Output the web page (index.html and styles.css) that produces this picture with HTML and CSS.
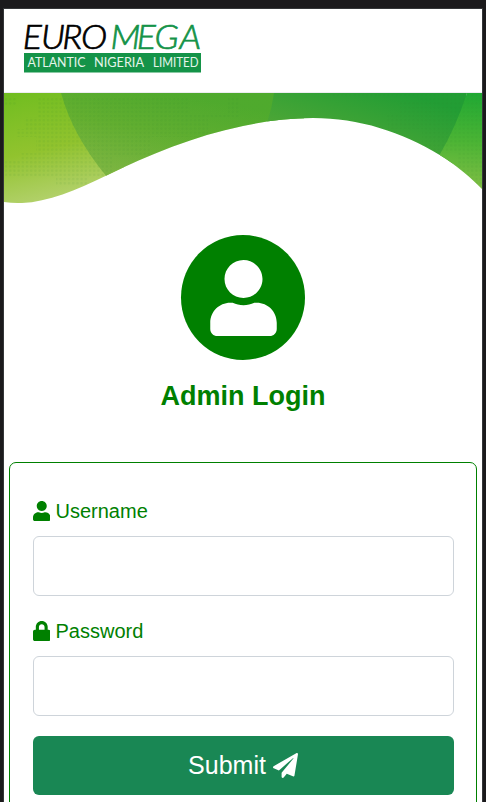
FILE: index.html
```html
<!DOCTYPE html>
<html lang="en">
<head>
<meta charset="utf-8">
<title>Admin Login</title>
<link rel="stylesheet" href="styles.css">
</head>
<body>
<main class="page">
  <header class="header">
    <svg class="logo" viewBox="0 0 178 50" role="img" aria-label="Euromega Atlantic Nigeria Limited">
      <text class="logo-name" transform="scale(1.06 1)" y="24.5" x="-1.2 16 36 53.8">EURO</text>
      <text class="logo-name logo-green" transform="scale(1.06 1)" y="24.5" x="81.6 106.4 123.2 146.6">MEGA</text>
      <rect class="logo-bar" y="29" width="177" height="19.5"/>
      <text class="logo-sub" x="3.5" y="42.5" textLength="58" lengthAdjust="spacingAndGlyphs">ATLANTIC</text>
      <text class="logo-sub" x="70" y="42.5" textLength="50" lengthAdjust="spacingAndGlyphs">NIGERIA</text>
      <text class="logo-sub" x="129" y="42.5" textLength="45.5" lengthAdjust="spacingAndGlyphs">LIMITED</text>
    </svg>
  </header>
  <svg class="wave" viewBox="0 0 478 112" aria-hidden="true">
    <defs>
      <clipPath id="crest"><path d="M0 0H478V96C466 84 452 72 435.7 62C398 39 355 25 309 25C285 25 262 28 239 33C190 43 145 62 102 82.7C72 97 44 109 18 110C12 110.3 6 110 0 109Z"/></clipPath>
      <linearGradient id="left" x2="0.25" y2="1"><stop stop-color="#70bd20"/><stop offset=".55" stop-color="#91c32e"/><stop offset="1" stop-color="#b3d16c"/></linearGradient>
      <linearGradient id="mid" gradientUnits="userSpaceOnUse" x1="160" y1="0" x2="145" y2="85"><stop stop-color="#53aa2d"/><stop offset=".45" stop-color="#65af30"/><stop offset="1" stop-color="#80b642"/></linearGradient>
      <linearGradient id="deep" gradientUnits="userSpaceOnUse" x1="400" y1="0" x2="380" y2="65"><stop stop-color="#229d34"/><stop offset="1" stop-color="#4ca636"/></linearGradient>
      <linearGradient id="right" gradientUnits="userSpaceOnUse" x1="465" y1="0" x2="455" y2="96"><stop stop-color="#20a833"/><stop offset=".5" stop-color="#4bb434"/><stop offset="1" stop-color="#82be45"/></linearGradient>
      <linearGradient id="shine"><stop stop-color="#35a030" stop-opacity="0"/><stop offset="1" stop-color="#45ac2d" stop-opacity=".3"/></linearGradient>
      <pattern id="dots" width="4.2" height="4.2" patternUnits="userSpaceOnUse"><circle cx="2" cy="2" r="1.3" fill="#287a27" fill-opacity=".08"/></pattern>
    </defs>
    <g clip-path="url(#crest)">
      <rect width="120" height="112" fill="url(#left)"/>
      <path d="M57 0C65 29 80 56 103 84L120 112H300V0Z" fill="url(#mid)"/>
      <path d="M57 0C65 29 80 56 103 84L120 112H300V0Z" fill="url(#shine)"/>
      <path d="M270 0Q268 15 263 30L300 112H440L463 0Z" fill="url(#deep)"/>
      <path d="M463 0Q452 34 435 63V112H478V0Z" fill="url(#right)"/>
      <path d="M0 4H12V12H0ZM34 4H186V20H224V4H236V24H204V44H148V64H108V84H84V92H52V84H0V68H16V60H32V44H12V36H20V24H34ZM308 4H326V0H478V92H454V60H418V36H384V28H382V20H396V8H414V4Z" fill="url(#dots)"/>
    </g>
  </svg>
  <section class="intro">
    <div class="avatar">
      <svg viewBox="0 0 448 512" class="avatar-icon" aria-hidden="true"><path id="user" d="M224 256c70.7 0 128-57.3 128-128S294.7 0 224 0 96 57.3 96 128s57.3 128 128 128zm89.6 32h-16.7c-22.2 10.2-46.9 16-72.9 16s-50.6-5.8-72.9-16h-16.7C60.2 288 0 348.2 0 422.4V464c0 26.5 21.5 48 48 48h352c26.5 0 48-21.5 48-48v-41.6c0-74.2-60.2-134.4-134.4-134.4z"/></svg>
    </div>
    <h1 class="title">Admin Login</h1>
  </section>
  <form class="card">
    <label class="label" for="username"><svg class="label-icon" viewBox="0 0 448 512" aria-hidden="true"><use href="#user"/></svg>Username</label>
    <input class="field" id="username" type="text">
    <label class="label" for="password"><svg class="label-icon" viewBox="0 0 448 512" aria-hidden="true"><path d="M400 224h-24v-72C376 68.2 307.8 0 224 0S72 68.2 72 152v72H48c-26.5 0-48 21.5-48 48v192c0 26.5 21.5 48 48 48h352c26.5 0 48-21.5 48-48V272c0-26.5-21.5-48-48-48zm-104 0H152v-72c0-39.7 32.3-72 72-72s72 32.3 72 72v72z"/></svg>Password</label>
    <input class="field" id="password" type="password">
    <button class="submit" type="button">Submit<svg class="submit-icon" viewBox="0 0 512 512" aria-hidden="true"><path d="M476 3.2L12.5 270.6c-18.1 10.4-15.8 35.6 2.2 43.2L121 358.4l287.3-253.2c5.5-4.9 13.3 2.6 8.6 8.3L176 407v80.5c0 23.6 28.5 32.9 42.5 15.8L282 426l124.6 52.2c14.2 6 30.4-2.9 33-18.2l72-432C515 7.8 493.3-6.8 476 3.2z"/></svg></button>
  </form>
</main>
</body>
</html>
```
FILE: styles.css
```css
* { box-sizing: border-box; }
body {
  margin: 0;
  height: 802px;
  overflow: hidden;
  padding: 9px 4px 0;
  background: #1b1a1c;
  font-family: "Liberation Sans", Arial, sans-serif;
}
.page {
  height: 793px;
  overflow: hidden;
  background: #fff;
  box-shadow: 0 0 0 1px #343638;
}
.header {
  height: 84px;
  padding: 15px 20px 0;
  border-bottom: 1px solid #ececf1;
}
.logo { display: block; width: 178px; height: 50px; overflow: visible; }
.logo-name { font: italic 300 33.5px Lato, sans-serif; fill: #000; stroke: #000; stroke-width: .7px; }
.logo-green { fill: #149348; stroke: #149348; }
.logo-bar { fill: #149348; }
.logo-sub { font: 400 12.5px Lato, sans-serif; fill: #e6f5eb; }
.wave { display: block; width: 478px; height: 112px; }
.intro {
  display: flex;
  flex-direction: column;
  align-items: center;
  padding-top: 30px;
}
.avatar {
  display: flex;
  align-items: center;
  justify-content: center;
  width: 124px;
  height: 125px;
  border-radius: 50%;
  background: green;
}
.avatar-icon { width: 67px; height: 76px; fill: #fff; }
.title { margin: 20px 0 0; font-size: 27px; line-height: 32px; color: green; }
.card {
  height: 400px;
  margin: 50px 5px 0;
  padding: 33px 22px 0 23px;
  border: 1px solid green;
  border-radius: 7px;
}
.label {
  display: flex;
  align-items: center;
  gap: 5.5px;
  height: 30px;
  margin: 0 0 10px -.5px;
  font-size: 20px;
  color: green;
}
.label-icon { width: 17.5px; height: 20px; fill: green; }
.field {
  display: block;
  width: 100%;
  height: 60px;
  margin: 0 0 20px;
  padding: 0 15px;
  border: 1px solid #ced4da;
  border-radius: 6px;
  background: #fff;
  font-size: 20px;
}
.submit {
  display: flex;
  align-items: center;
  justify-content: center;
  gap: 7px;
  width: 100%;
  height: 59px;
  padding: 0 1px 0 0;
  border: 0;
  border-radius: 6px;
  background: #198754;
  color: #fff;
  font: 25px "Liberation Sans", Arial, sans-serif;
}
.submit-icon { width: 25px; height: 25px; fill: #fff; }
```
